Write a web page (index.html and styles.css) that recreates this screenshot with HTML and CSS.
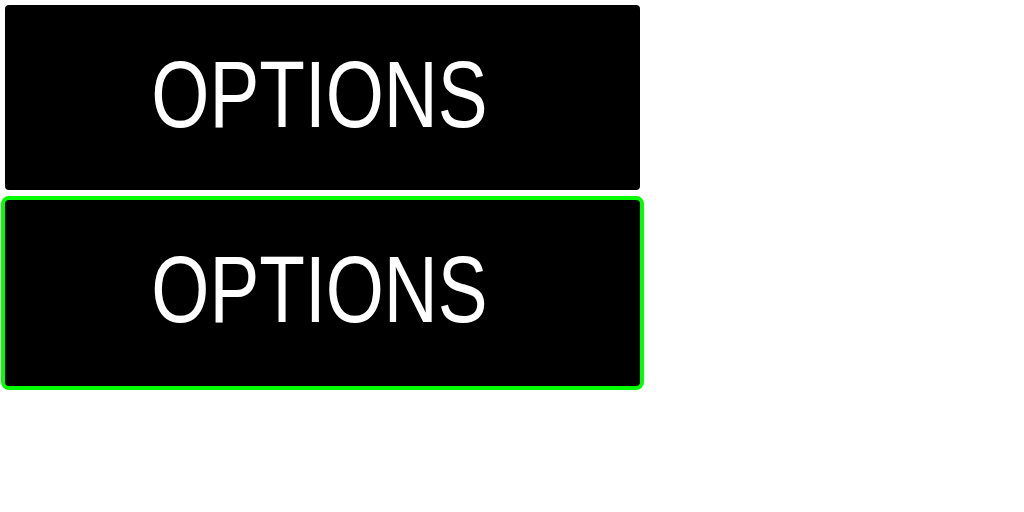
FILE: index.html
```html
<!DOCTYPE html>
<html>
<head>
<meta charset="utf-8">
<link rel="stylesheet" href="styles.css">
</head>
<body>
<div class="stack">
  <button class="opt"><span class="label">OPTIONS</span></button>
  <button class="opt focused"><span class="label">OPTIONS</span></button>
</div>
</body>
</html>
```
FILE: styles.css
```css
html, body {
  margin: 0;
  padding: 0;
  background: #ffffff;
}
.stack {
  display: flex;
  flex-direction: column;
  align-items: flex-start;
  gap: 10px;
  padding: 5px;
}
.opt {
  width: 635px;
  height: 185px;
  margin: 0;
  padding: 0 0 6px 0;
  border: none;
  border-radius: 4px;
  background: #000000;
  color: #ffffff;
  font-family: "Liberation Sans", Arial, sans-serif;
  font-size: 94px;
  line-height: 1;
  display: flex;
  align-items: center;
  justify-content: center;
}
.label {
  display: inline-block;
  transform: scaleX(0.795);
  margin-right: 5px;
}
.focused {
  outline: none;
  height: 186px;
  box-shadow: 0 0 0 4px #00ff00;
}
```
